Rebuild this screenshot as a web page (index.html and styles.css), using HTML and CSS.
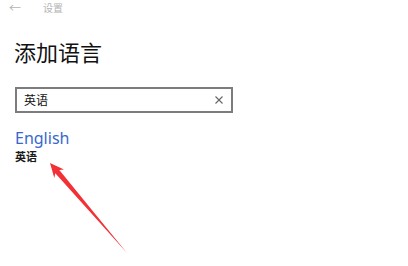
FILE: index.html
```html
<!DOCTYPE html>
<html lang="zh-CN">
<head>
    <meta charset="UTF-8">
    <title>设置</title>
    <link rel="stylesheet" href="styles.css">
</head>
<body>
    <div class="page">
        <div class="titlebar">
            <span class="back">&#8592;</span>
            <span class="app-name">设置</span>
        </div>
        <h1 class="title">添加语言</h1>
        <div class="search">
            <span class="search-text">英语</span>
            <svg class="clear" width="8" height="8" viewBox="0 0 8 8">
                <path d="M0.5 0.5 L7.5 7.5 M7.5 0.5 L0.5 7.5" stroke="#666" stroke-width="1.1" fill="none"/>
            </svg>
        </div>
        <div class="result">
            <div class="lang-name">English</div>
            <div class="lang-local">英语</div>
        </div>
        <svg class="pointer" width="408" height="266" viewBox="0 0 408 266">
            <polygon points="50,163 64,169.5 59.3,169.9 127,253 55.3,173.3 54.3,178" fill="#f23137"/>
        </svg>
    </div>
</body>
</html>
```

FILE: styles.css
```css
body {
    margin: 0;
    background-color: #ffffff;
    font-family: "Noto Sans", "Noto Sans CJK SC", sans-serif;
}
.page {
    position: relative;
    width: 408px;
    height: 266px;
    overflow: hidden;
}
.titlebar {
    display: flex;
    align-items: center;
    height: 15px;
    padding-left: 9px;
    color: #b4b4b4;
    font-size: 10px;
}
.back {
    width: 34px;
    font-size: 12px;
}
.title {
    margin: 22px 0 0 14px;
    font-size: 22px;
    font-weight: normal;
    line-height: 30px;
    color: #111111;
}
.search {
    display: flex;
    align-items: center;
    justify-content: space-between;
    box-sizing: border-box;
    width: 218px;
    height: 26px;
    margin: 20px 0 0 15px;
    padding: 0 8px 0 7px;
    border: 2px solid #7d7d7d;
}
.search-text {
    font-size: 12px;
    color: #111111;
}
.result {
    margin: 15px 0 0 15px;
}
.lang-name {
    font-size: 16px;
    line-height: 20px;
    color: #3868cc;
}
.lang-local {
    margin-top: 2px;
    font-size: 11px;
    line-height: 13px;
    font-weight: bold;
    color: #1a1a1a;
}
.pointer {
    position: absolute;
    left: 0;
    top: 0;
}
```
